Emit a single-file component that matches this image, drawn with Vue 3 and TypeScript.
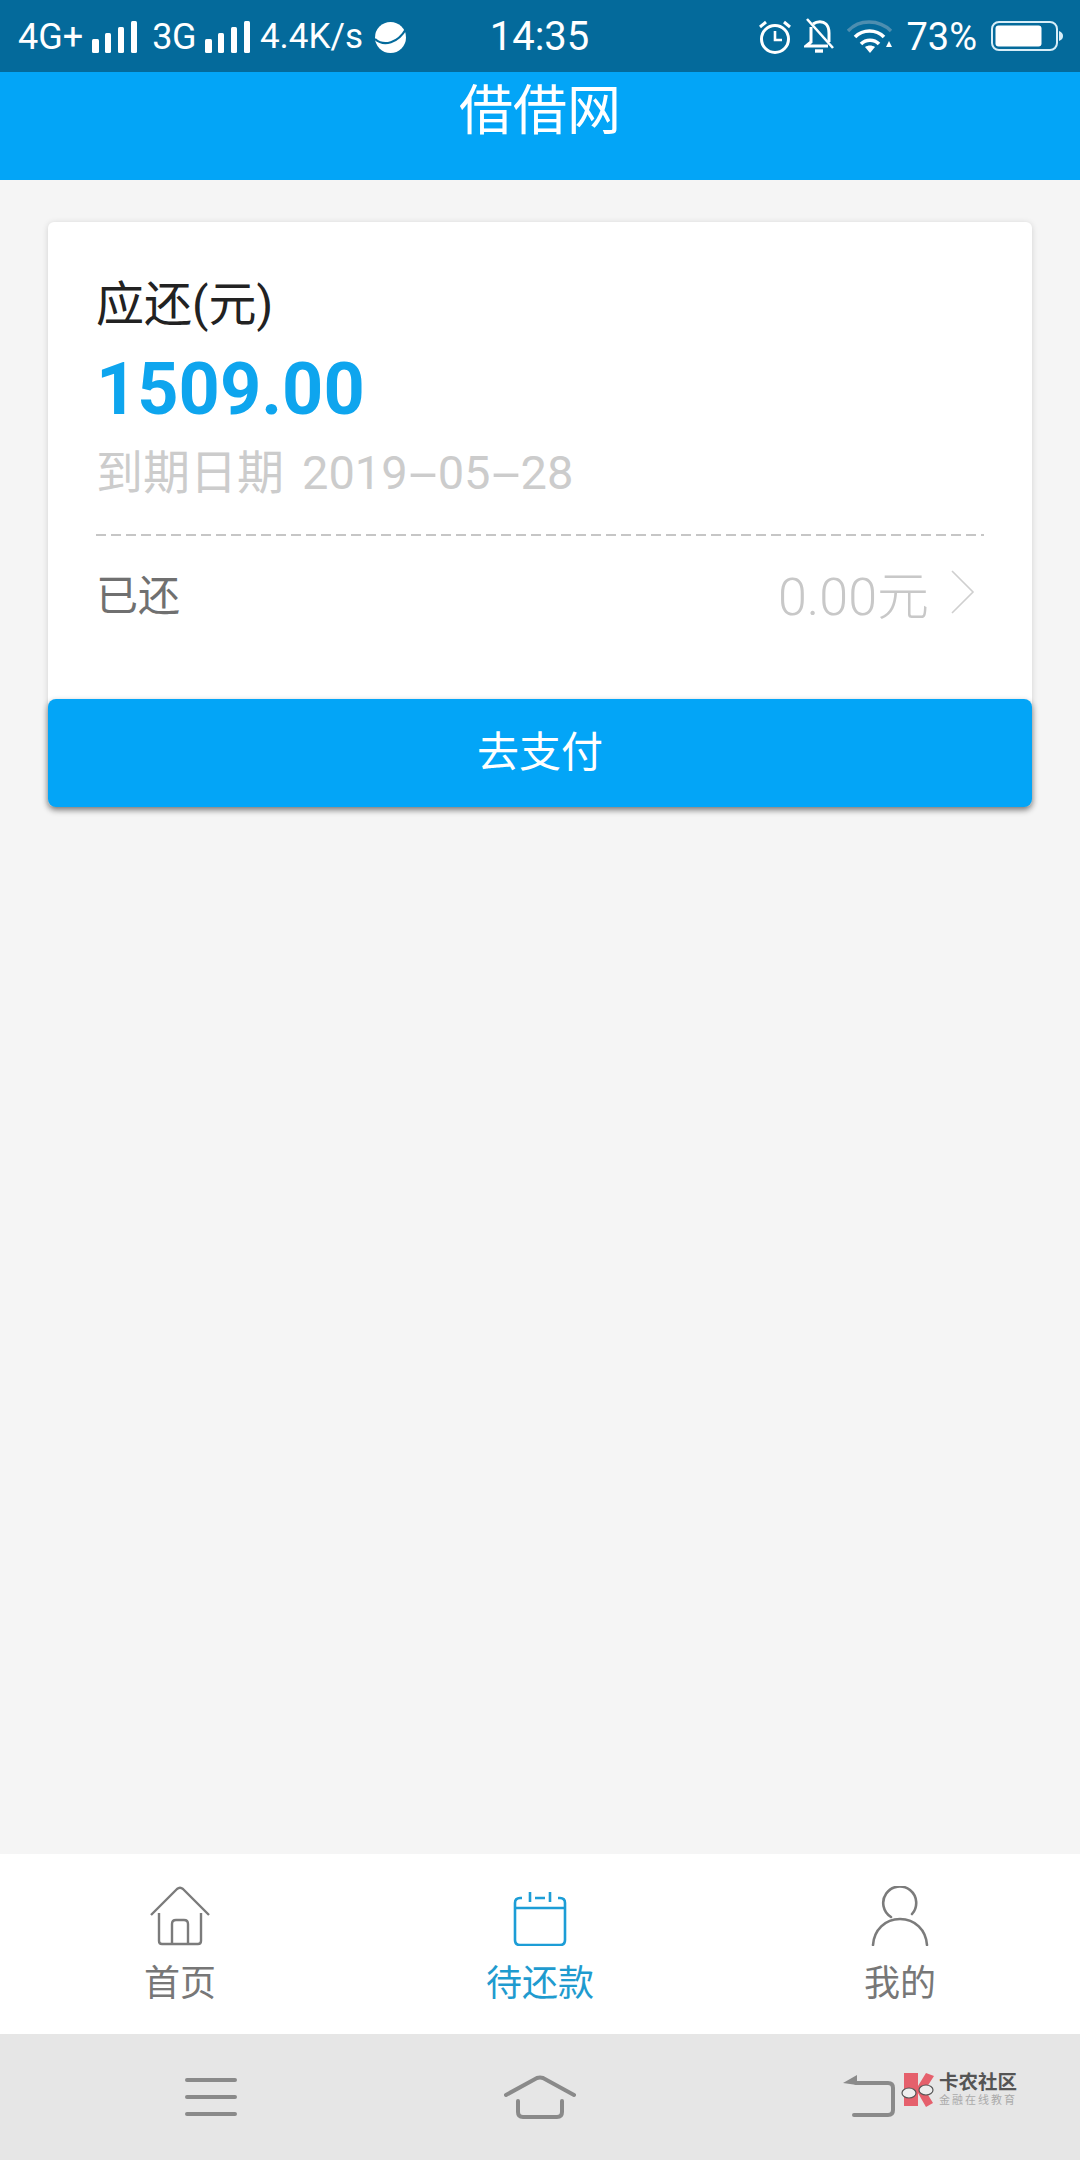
<script setup lang="ts">
interface Tab { label: string; active?: boolean }
const tabs: Tab[] = [{ label: '首页' }, { label: '待还款', active: true }, { label: '我的' }]
</script>

<template>
  <div class="screen">
    <div class="status">
      <div class="st-left">
        <span class="net">4G+</span>
        <svg class="bars" width="45" height="32" viewBox="0 0 45 32"><rect x="0" y="18" width="7" height="14" rx="1.5"/><rect x="13" y="12" width="6" height="20" rx="1.5"/><rect x="26" y="6" width="6" height="26" rx="1.5"/><rect x="39" y="0" width="6" height="32" rx="1.5"/></svg>
        <span class="net net2">3G</span>
        <svg class="bars" width="45" height="32" viewBox="0 0 45 32"><rect x="0" y="18" width="7" height="14" rx="1.5"/><rect x="13" y="12" width="6" height="20" rx="1.5"/><rect x="26" y="6" width="6" height="26" rx="1.5"/><rect x="39" y="0" width="6" height="32" rx="1.5"/></svg>
        <span class="net speed">4.4K/s</span>
        <svg class="planet" width="33" height="33" viewBox="0 0 33 33"><circle cx="16.5" cy="16.5" r="15.5" fill="#fff"/><path d="M1 18C10 26 24 22 32 8" fill="none" stroke="#046a9b" stroke-width="2.2"/></svg>
      </div>
      <div class="time">14:35</div>
      <div class="st-right">
        <svg width="34" height="35" viewBox="0 0 34 35" fill="none" stroke="#fff" stroke-width="3"><circle cx="17" cy="20" r="13.500"/><path d="M17 12v9h7" stroke-width="2.600"/><path d="M2 8l6-5M32 8l-6-5" stroke-width="3"/></svg>
        <svg class="bell" width="30" height="36" viewBox="0 0 30 36" fill="none" stroke="#fff" stroke-width="3"><path d="M3 1L29 30" stroke-width="2.600"/><path d="M7 9v15l-5 4h22"/><path d="M9 6c4-3 10-3 13 0 3 3 3 6 3 9v9"/><path d="M11 33h8" stroke-width="3.400"/></svg>
        <svg class="wifi" width="46" height="33" viewBox="0 0 46 33" fill="none" stroke="#fff"><path d="M1 11C12 -1 32 -1 44 11" stroke="#4d8eb0" stroke-width="3.400"/><path d="M8 17c8-8 21-8 29 0" stroke-width="3.600"/><path d="M14 24c5-5 13-5 18 0" stroke-width="3.600"/><path d="M18 27c3-2 7-2 10 0l-5 6z" fill="#fff" stroke="none"/><path d="M39 27l6 0-3-6z" fill="#fff" stroke="none"/></svg>
        <span class="net pct">73%</span>
        <svg width="72" height="30" viewBox="0 0 72 30"><rect x="1" y="1" width="65" height="28" rx="7" fill="none" stroke="#d8eef8" stroke-width="2"/><rect x="4.500" y="4.500" width="46" height="21" rx="3" fill="#fff"/><path d="M68 10c3 1 4 3 4 5s-1 4-4 5z" fill="#d8eef8"/></svg>
      </div>
    </div>

    <header class="header"><h1>借借网</h1></header>

    <main class="main">
      <section class="card">
        <div class="body">
          <div class="label">应还(元)</div>
          <div class="amount">1509.00</div>
          <div class="date">到期日期<span class="digits">2019<span class="hy">-</span>05<span class="hy">-</span>28</span></div>
          <div class="dash"></div>
          <div class="paid">
            <span class="paid-label">已还</span>
            <span class="paid-value">0.00元</span>
            <svg class="chev" width="24" height="44" viewBox="0 0 24 44" fill="none" stroke="#cfcfcf" stroke-width="1.600"><path d="M1 1L22 22L1 43"/></svg>
          </div>
        </div>
        <button class="pay">去支付</button>
      </section>
    </main>

    <nav class="tabs">
      <div v-for="t in tabs" :key="t.label" class="tab" :class="{ active: t.active }">
        <svg v-if="t.label === '首页'" width="60" height="60" viewBox="0 0 60 60" fill="none" stroke="#7b7b7b" stroke-width="2.400" stroke-linejoin="round"><path d="M1 29L27 3q3-2.500 6 0L59 29"/><path d="M9 27v28q0 3 3 3h36q3 0 3-3V27"/><path d="M22 58V38q0-4 4-4h8q4 0 4 4v20"/></svg>
        <svg v-else-if="t.active" width="60" height="60" viewBox="0 0 60 60" fill="none" stroke="#1c9dd6" stroke-width="2.600" stroke-linejoin="round"><path d="M12 12H10q-5 0-5 5v37q0 5 5 5h40q5 0 5-5V17q0-5-5-5h-2"/><path d="M5 22h50"/><path d="M20 6v10M40 6v10M25 12h10"/></svg>
        <svg v-else width="60" height="60" viewBox="0 0 60 60" fill="none" stroke="#7b7b7b" stroke-width="2.600" stroke-linecap="round"><path d="M42 28A16.500 16.500 0 1 0 21 31"/><path d="M3 59C4 44 15 33 30 33s26 11 27 26"/></svg>
        <span class="tab-label">{{ t.label }}</span>
      </div>
    </nav>

    <footer class="sysnav">
      <svg width="52" height="40" viewBox="0 0 52 40" stroke="#8a8a8a" stroke-width="4" stroke-linecap="round"><path d="M2 3h48M2 20h48M2 37h48"/></svg>
      <svg width="72" height="44" viewBox="0 0 72 44" fill="none" stroke="#8a8a8a" stroke-width="4" stroke-linecap="round" stroke-linejoin="round"><path d="M2 20L33 3q3-1 6 0L70 20"/><path d="M14 26v11q0 5 5 5h34q5 0 5-5V26"/></svg>
      <svg width="52" height="44" viewBox="0 0 52 44" fill="none" stroke="#8a8a8a" stroke-width="4" stroke-linecap="round" stroke-linejoin="round"><path d="M13 8h32q5 0 5 5v22q0 5-5 5H11"/><path d="M0 8L14 0v10z" fill="#8a8a8a" stroke="none"/></svg>
      <div class="mark">
        <svg width="36" height="36" viewBox="0 0 36 36"><path d="M4 1h14v33H4z" fill="#e5606c"/><path d="M18 14L26 1l8 3-9 14 8 13-7 4-8-14z" fill="#e5606c"/><ellipse cx="9" cy="21" rx="7" ry="5" fill="#eee" stroke="#555" stroke-width="1.200"/><ellipse cx="26" cy="18" rx="7" ry="5" fill="#eee" stroke="#555" stroke-width="1.200"/></svg>
        <div class="mark-text"><b>卡农社区</b><small>金融在线教育</small></div>
      </div>
    </footer>
  </div>
</template>

<style>
html, body { margin: 0; padding: 0; }
</style>

<style scoped>
.screen {
  width: 1080px;
  height: 2160px;
  display: flex;
  flex-direction: column;
  background: #f5f5f5;
  font-family: Roboto, "Noto Sans CJK SC", sans-serif;
  position: relative;
  overflow: hidden;
}
.status {
  height: 72px;
  flex: none;
  background: #046a9b;
  color: #fff;
  display: grid;
  grid-template-columns: 1fr auto 1fr;
  align-items: center;
  padding: 0 17px 0 18px;
  box-sizing: border-box;
}
.st-left, .st-right { display: flex; align-items: center; }
.st-right { justify-content: flex-end; }
.st-left svg.bars { fill: #fff; margin-left: 9px; margin-top: 2px; }
.net { font-size: 36px; line-height: 40px; white-space: nowrap; margin-top: 2px; }
.net2 { margin-left: 15px; letter-spacing: -0.5px; }
.speed { margin-left: 10px; font-size: 35px; }
.planet { margin-left: 11px; margin-top: 2px; }
.time { font-size: 40px; line-height: 44px; margin-top: 2px; margin-left: -2px; }
.bell { margin-left: 12px; }
.wifi { margin-left: 13px; }
.pct { margin-left: 13px; font-size: 38px; margin-right: 14px; }
.header {
  height: 108px;
  flex: none;
  background: #03a5f7;
}
.header h1 {
  margin: 0;
  font-size: 54px;
  font-weight: 400;
  line-height: 80px;
  color: #fff;
  text-align: center;
}
.main { flex: 1; padding: 42px 48px 0; }
.card {
  background: #fff;
  border-radius: 6px;
  box-shadow: 0 1px 6px rgba(0, 0, 0, 0.15);
}
.body { padding: 58px 48px 72px; }
.label { font-size: 48px; line-height: 50px; color: #222; }
.amount {
  font-size: 72px;
  font-weight: 700;
  line-height: 80px;
  margin-top: 20px;
  color: #0ea5ee;
}
.date { font-size: 47px; line-height: 56px; margin-top: 15px; color: #ccc; white-space: nowrap; }
.digits { margin-left: 18px; }
.hy { display: inline-block; width: 30px; text-align: center; transform: scaleX(2.2); }
.dash {
  height: 2px;
  margin-top: 33px;
  background: repeating-linear-gradient(90deg, #c6c6c6 0 10px, transparent 10px 15px);
}
.paid { display: flex; align-items: center; height: 60px; margin-top: 26px; margin-bottom: 5px; }
.paid-label { font-size: 42px; color: #707070; flex: 1; }
.paid-value { font-size: 52px; font-weight: 300; color: #c8c8c8; }
.chev { margin-left: 22px; margin-right: 9px; }
.pay {
  display: block;
  width: 100%;
  height: 108px;
  border: 0;
  border-radius: 8px;
  background: #03a5f7;
  color: #fff;
  font-family: inherit;
  font-size: 42px;
  padding: 0 0 10px;
  box-shadow: 0 3px 6px rgba(0, 0, 0, 0.45);
}
.tabs {
  height: 180px;
  flex: none;
  background: #fff;
  display: flex;
}
.tab {
  flex: 1;
  display: flex;
  flex-direction: column;
  align-items: center;
  padding-top: 32px;
  color: #777;
}
.tab.active { color: #1f9bcf; }
.tab-label { font-size: 36px; line-height: 40px; margin-top: 18px; }
.sysnav {
  height: 126px;
  flex: none;
  background: #e6e6e6;
  display: grid;
  grid-template-columns: repeat(3, 1fr);
  justify-items: center;
  align-items: center;
  padding: 0 46px;
  position: relative;
}
.mark {
  position: absolute;
  left: 900px;
  top: 38px;
  display: flex;
  align-items: center;
  gap: 3px;
}
.mark-text { display: flex; flex-direction: column; }
.mark-text b { font-size: 19.500px; line-height: 22px; color: #555; white-space: nowrap; }
.mark-text small { font-size: 11px; line-height: 14px; letter-spacing: 2px; color: #aaa; white-space: nowrap; }
</style>
